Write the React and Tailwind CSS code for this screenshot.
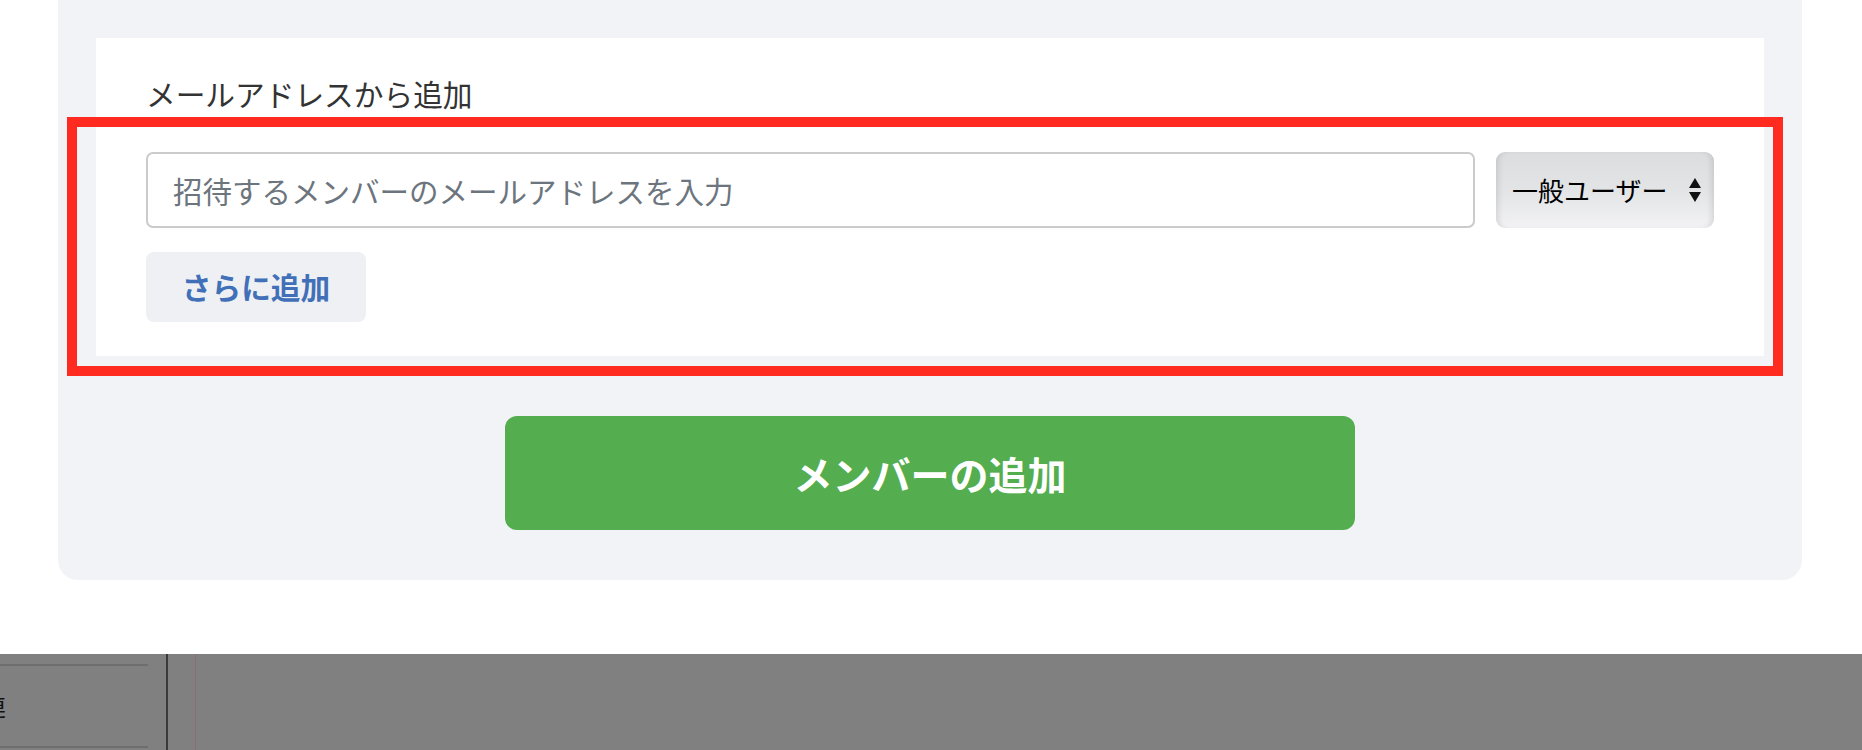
import React from "react";

export default function App() {
  return (
    <div className="relative w-[1862px] h-[750px] bg-white overflow-hidden font-['Noto_Sans_CJK_JP','Noto_Sans_CJK_SC',sans-serif]">
      <div className="h-[654px]">
        <div className="ml-[58px] w-[1744px] bg-[#f2f3f7] rounded-b-[20px] pt-[38px] pb-[50px] px-[38px] flex flex-col items-center">
          <div className="w-full bg-white pt-[36px] px-[50px] pb-[34px]">
            <div className="text-[29.7px] leading-[40px] text-[#333333]">メールアドレスから追加</div>
            <div className="mt-[38px] flex items-center">
              <input
                className="flex-1 h-[76px] border-2 border-[#cbcbcb] rounded-[7px] pl-[25px] text-[29.5px] text-[#333] placeholder:text-[#6c757d] outline-none bg-white"
                placeholder="招待するメンバーのメールアドレスを入力"
              />
              <div className="relative ml-[21px] w-[218px] h-[76px] rounded-[9px] bg-gradient-to-b from-[#dcdddf] via-[#e3e4e6] to-[#f2f2f4] shadow-[inset_6px_0_6px_-4px_rgba(0,0,0,0.12),inset_-6px_0_6px_-4px_rgba(0,0,0,0.12)] flex items-center pl-[16px] pr-[12px]">
                <span className="text-[26px] text-black leading-none">一般ユーザー</span>
                <svg className="ml-auto" width="14" height="26" viewBox="0 0 14 26">
                  <path d="M7 1 L13 11 L1 11 Z" fill="#111" />
                  <path d="M1 15 L13 15 L7 25 Z" fill="#111" />
                </svg>
              </div>
            </div>
            <button className="mt-[24px] w-[220px] h-[70px] rounded-[8px] bg-[#eef0f3] text-[#4170b8] font-bold text-[29.7px] leading-none flex items-center justify-center">
              さらに追加
            </button>
          </div>
          <button className="mt-[60px] w-[850px] h-[114px] rounded-[12px] bg-[#54ad4f] text-white font-bold text-[39px] leading-none flex items-center justify-center">
            メンバーの追加
          </button>
        </div>
      </div>
      <div className="h-[96px] bg-[#808080] flex">
        <div className="w-[148px] mt-[10px] h-[84px] border-y-2 border-[#6e6e6e] flex items-center overflow-hidden">
          <span className="ml-[-18px] text-[24px] text-[#111] leading-none">連</span>
        </div>
        <div className="ml-[18px] w-[2px] bg-[#3a3a3a]" />
        <div className="ml-[27px] w-px bg-[#8c6e6e]" />
      </div>
      <div className="absolute left-[67px] top-[117px] w-[1716px] h-[259px] border-[10px] border-[#ff2b20]" />
    </div>
  );
}
